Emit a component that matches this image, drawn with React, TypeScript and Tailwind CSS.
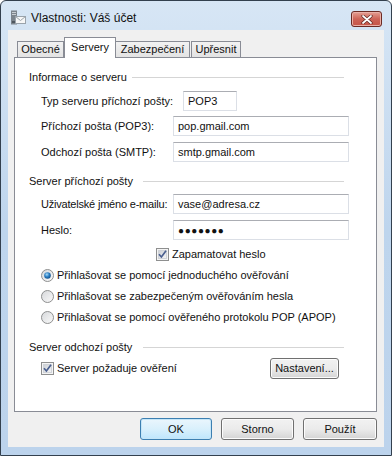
import React from "react";

const font = "font-['Liberation_Sans',Arial,sans-serif]";

const Check = () => (
  <svg width="13" height="13" viewBox="0 0 13 13" className="shrink-0">
    <defs>
      <linearGradient id="cb" x1="0" y1="0" x2="1" y2="1">
        <stop offset="0" stopColor="#cbcfd5" />
        <stop offset="1" stopColor="#f6f6f6" />
      </linearGradient>
    </defs>
    <rect x="0.5" y="0.5" width="12" height="12" fill="#f4f4f4" stroke="#8e8f8f" />
    <rect x="2.5" y="2.5" width="8" height="8" fill="url(#cb)" stroke="#d0d3d8" />
    <path d="M3 6.2 L5.4 9 L10 2.8" fill="none" stroke="#4a5f8f" strokeWidth="1.7" />
  </svg>
);

const Radio = ({ on }: { on?: boolean }) => (
  <svg width="13" height="13" viewBox="0 0 13 13" className="shrink-0">
    <defs>
      <linearGradient id="rb" x1="0" y1="0" x2="1" y2="1">
        <stop offset="0" stopColor="#d5d7da" />
        <stop offset="1" stopColor="#fbfbfb" />
      </linearGradient>
      <radialGradient id="rd" cx="0.4" cy="0.35" r="0.7">
        <stop offset="0" stopColor="#a8dcf8" />
        <stop offset="0.5" stopColor="#2c7fc4" />
        <stop offset="1" stopColor="#124d86" />
      </radialGradient>
    </defs>
    <circle cx="6.5" cy="6.5" r="6" fill="url(#rb)" stroke="#8e8f8f" />
    {on && <circle cx="6.5" cy="6.5" r="3.3" fill="url(#rd)" />}
  </svg>
);

const Input = ({ value, className }: { value: string; className: string }) => (
  <div
    className={`h-[20px] border border-[#dbdfe6] border-t-[#abadb3] bg-white pl-[4px] flex items-center ${className}`}
  >
    {value}
  </div>
);

const Header = ({ title, w }: { title: string; w: string }) => (
  <div className="flex h-[14px] items-center pr-[5px]">
    <span className={`${w} shrink-0 whitespace-nowrap`}>{title}</span>
    <div className="h-px flex-1 bg-[#d5d5d5]" />
  </div>
);

const Button = ({ label, primary, className }: { label: string; primary?: boolean; className?: string }) => (
  <button
    className={`flex items-center justify-center rounded-[3px] border ${
      primary
        ? "border-[#3c7fb1] bg-gradient-to-b from-[#eaf6fd] via-[#d9f0fc] to-[#bee6fd] shadow-[inset_0_0_0_1px_#c5e6f8]"
        : "border-[#707070] bg-gradient-to-b from-[#f2f2f2] via-[#ebebeb] to-[#d4d4d4] shadow-[inset_0_0_0_1px_#fcfcfc]"
    } ${className ?? ""}`}
  >
    {label}
  </button>
);

export default function App() {
  return (
    <div
      className={`${font} flex h-[456px] w-[392px] flex-col overflow-hidden rounded-t-[6px] border border-[#33404e] bg-gradient-to-b from-[#d7e6f5] via-[#bed5ed] to-[#bcd3ec] text-[11px] text-[#111]`}
    >
      {/* title bar */}
      <div className="flex h-[29px] shrink-0 items-start pl-[9px] pr-[9px] pt-[9px]">
        <svg width="16" height="16" viewBox="0 0 16 16" className="shrink-0">
          <rect x="1" y="0.5" width="6" height="14" fill="#7c848c" />
          <rect x="2" y="2" width="4" height="1" fill="#c9ced3" />
          <rect x="2" y="4" width="4" height="1" fill="#c9ced3" />
          <rect x="2" y="11" width="4" height="2" fill="#4f575f" />
          <rect x="5.5" y="6.5" width="10" height="7" fill="#f7f7f7" stroke="#9aa3ab" />
          <path d="M5.5 6.5 L10.5 10.5 L15.5 6.5" fill="none" stroke="#9aa3ab" />
        </svg>
        <span className="ml-[5px] text-[12px] leading-[16px]">Vlastnosti: Váš účet</span>
        <div className="ml-auto mt-[1px] flex h-[16px] w-[31px] items-center justify-center rounded-[3px] border border-[#6b2a24] bg-gradient-to-b from-[#e4a095] via-[#cd6357] to-[#c65548] shadow-[inset_0_0_0_1px_#eab0a7]">
          <svg width="12" height="9" viewBox="0 0 12 9">
            <path d="M2 1 L10 8 M10 1 L2 8" stroke="#5b2520" strokeWidth="3.2" strokeLinecap="round" />
            <path d="M2 1 L10 8 M10 1 L2 8" stroke="#ffffff" strokeWidth="1.8" strokeLinecap="round" />
          </svg>
        </div>
      </div>

      {/* client area */}
      <div className="mx-[7px] flex h-[417px] shrink-0 flex-col bg-[#f0f0f0] pl-[6px] pr-[7px] pt-[7px]">
        {/* tabs */}
        <div className="flex h-[20px] items-end pl-[3px]">
          <div className="flex h-[16px] w-[47px] items-center justify-center border border-b-0 border-[#898c95] bg-gradient-to-b from-[#f2f2f2] to-[#e3e3e3]">
            Obecné
          </div>
          <div className="relative z-10 -mb-px flex h-[21px] w-[52px] items-center justify-center border border-b-0 border-[#898c95] bg-white pb-[2px]">
            Servery
          </div>
          <div className="flex h-[16px] w-[74px] items-center justify-center border border-b-0 border-l-0 border-[#898c95] bg-gradient-to-b from-[#f2f2f2] to-[#e3e3e3]">
            Zabezpečení
          </div>
          <div className="ml-px flex h-[16px] w-[50px] items-center justify-center border border-b-0 border-[#898c95] bg-gradient-to-b from-[#f2f2f2] to-[#e3e3e3]">
            Upřesnit
          </div>
        </div>

        {/* panel */}
        <div className="flex h-[355px] flex-col border border-[#898c95] bg-white pl-[14px] pr-[27px] pt-[12px]">
          <Header title="Informace o serveru" w="w-[103px]" />
          <div className="mt-[7px] flex h-[20px] items-center pl-[12px]">
            <span className="w-[142px]">Typ serveru příchozí pošty:</span>
            <Input value="POP3" className="w-[54px] border-[#b5c7da] border-t-[#9fb3c9]" />
          </div>
          <div className="mt-[5px] flex h-[20px] items-center pl-[12px]">
            <span className="w-[132px]">Příchozí pošta (POP3):</span>
            <Input value="pop.gmail.com" className="flex-1" />
          </div>
          <div className="mt-[6px] flex h-[20px] items-center pl-[12px]">
            <span className="w-[132px]">Odchozí pošta (SMTP):</span>
            <Input value="smtp.gmail.com" className="flex-1" />
          </div>

          <div className="mt-[12px]">
            <Header title="Server příchozí pošty" w="w-[114px]" />
          </div>
          <div className="mt-[6px] flex h-[20px] items-center pl-[12px]">
            <span className="w-[132px] tracking-[-0.2px]">Uživatelské jméno e-mailu:</span>
            <Input value="vase@adresa.cz" className="flex-1" />
          </div>
          <div className="mt-[6px] flex h-[20px] items-center pl-[12px]">
            <span className="w-[132px]">Heslo:</span>
            <Input value="●●●●●●●" className="flex-1 text-[10px] tracking-[0.6px]" />
          </div>
          <div className="mt-[7px] flex h-[14px] items-center gap-[3px] pl-[127px]">
            <Check />
            <span>Zapamatovat heslo</span>
          </div>
          <div className="mt-[7px] flex h-[14px] items-center gap-[3px] pl-[12px]">
            <Radio on />
            <span>Přihlašovat se pomocí jednoduchého ověřování</span>
          </div>
          <div className="mt-[7px] flex h-[14px] items-center gap-[3px] pl-[12px]">
            <Radio />
            <span>Přihlašovat se zabezpečeným ověřováním hesla</span>
          </div>
          <div className="mt-[7px] flex h-[14px] items-center gap-[3px] pl-[12px]">
            <Radio />
            <span>Přihlašovat se pomocí ověřeného protokolu POP (APOP)</span>
          </div>

          <div className="mt-[16px]">
            <Header title="Server odchozí pošty" w="w-[114px]" />
          </div>
          <div className="mt-[4px] flex h-[21px] items-center gap-[3px] pl-[12px]">
            <Check />
            <span>Server požaduje ověření</span>
            <Button label="Nastavení..." className="ml-auto mr-[10px] h-[21px] w-[69px]" />
          </div>
        </div>

        {/* dialog buttons */}
        <div className="mt-[6px] flex justify-end gap-[9px]">
          <Button label="OK" primary className="h-[22px] w-[72px]" />
          <Button label="Storno" className="h-[22px] w-[73px]" />
          <Button label="Použít" className="h-[22px] w-[74px]" />
        </div>
      </div>
    </div>
  );
}
